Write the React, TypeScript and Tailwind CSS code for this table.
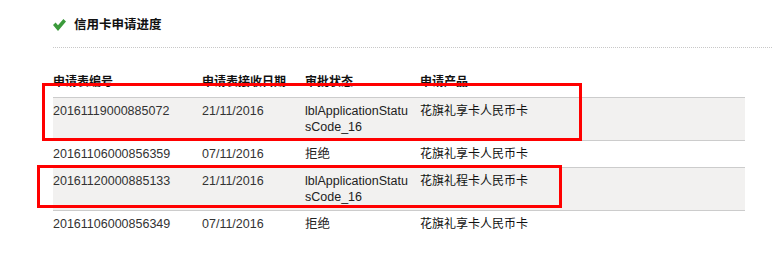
import React from 'react'

interface Application {
  id: string
  date: string
  status: string
  product: string
}

const applications: Application[] = [
  { id: '20161119000885072', date: '21/11/2016', status: 'lblApplicationStatusCode_16', product: '花旗礼享卡人民币卡' },
  { id: '20161106000856359', date: '07/11/2016', status: '拒绝', product: '花旗礼享卡人民币卡' },
  { id: '20161120000885133', date: '21/11/2016', status: 'lblApplicationStatusCode_16', product: '花旗礼程卡人民币卡' },
  { id: '20161106000856349', date: '07/11/2016', status: '拒绝', product: '花旗礼享卡人民币卡' },
]

function CheckIcon() {
  return (
    <svg width="13" height="12" viewBox="0 0 13 12" className="shrink-0">
      <polygon points="0,6 2.6,3.6 5,6.2 10.4,0 13,2.4 5,12" fill="#3b9a3b" />
    </svg>
  )
}

export default function App() {
  return (
    <div className="relative h-[266px] w-[772px] overflow-hidden bg-white font-['Liberation_Sans','Noto_Sans_CJK_SC',sans-serif] text-[12.5px] leading-[16px] text-[#333]">
      <div className="pl-[53px] pt-[17px]">
        {/* Title */}
        <div className="flex items-center gap-[8px]">
          <CheckIcon />
          <h2 className="text-[12.5px] font-bold leading-[16px] text-[#111]">信用卡申请进度</h2>
        </div>
        <div className="mt-[14px] border-t border-dotted border-[#c8c8c8]" />

        {/* Applications table */}
        <table className="mt-[20px] w-[692px] table-fixed border-collapse text-left">
          <colgroup>
            <col className="w-[149px]" />
            <col className="w-[103px]" />
            <col className="w-[115px]" />
            <col />
          </colgroup>
          <thead>
            <tr className="border-b border-[#cccccc] text-[12px]">
              <th className="pt-[6px] pb-[7px] font-bold text-[#111]">申请表编号</th>
              <th className="pt-[6px] pb-[7px] font-bold text-[#111]">申请表接收日期</th>
              <th className="pt-[6px] pb-[7px] font-bold text-[#111]">审批状态</th>
              <th className="pt-[6px] pb-[7px] font-bold text-[#111]">申请产品</th>
            </tr>
          </thead>
          <tbody>
            {applications.map((app, i) => (
              <tr
                key={app.id}
                className={`${i % 2 === 0 ? 'bg-[#f2f1f0]' : 'bg-white'} ${i < applications.length - 1 ? 'border-b border-[#cccccc]' : ''}`}
              >
                <td className="pt-[5px] pb-[5px] align-top">{app.id}</td>
                <td className="pt-[5px] pb-[5px] align-top">{app.date}</td>
                <td className="pt-[5px] pb-[5px] pr-[11px] align-top break-all text-[#222]">{app.status}</td>
                <td className="pt-[5px] pb-[5px] align-top text-[12px] text-[#111]">{app.product}</td>
              </tr>
            ))}
          </tbody>
        </table>
      </div>

      {/* Annotation boxes drawn over the table */}
      <div className="absolute left-[42px] top-[83px] h-[58px] w-[540px] border-[3px] border-[#ff0000]" />
      <div className="absolute left-[37px] top-[165px] h-[43px] w-[525px] border-[3px] border-[#ff0000]" />
    </div>
  )
}
